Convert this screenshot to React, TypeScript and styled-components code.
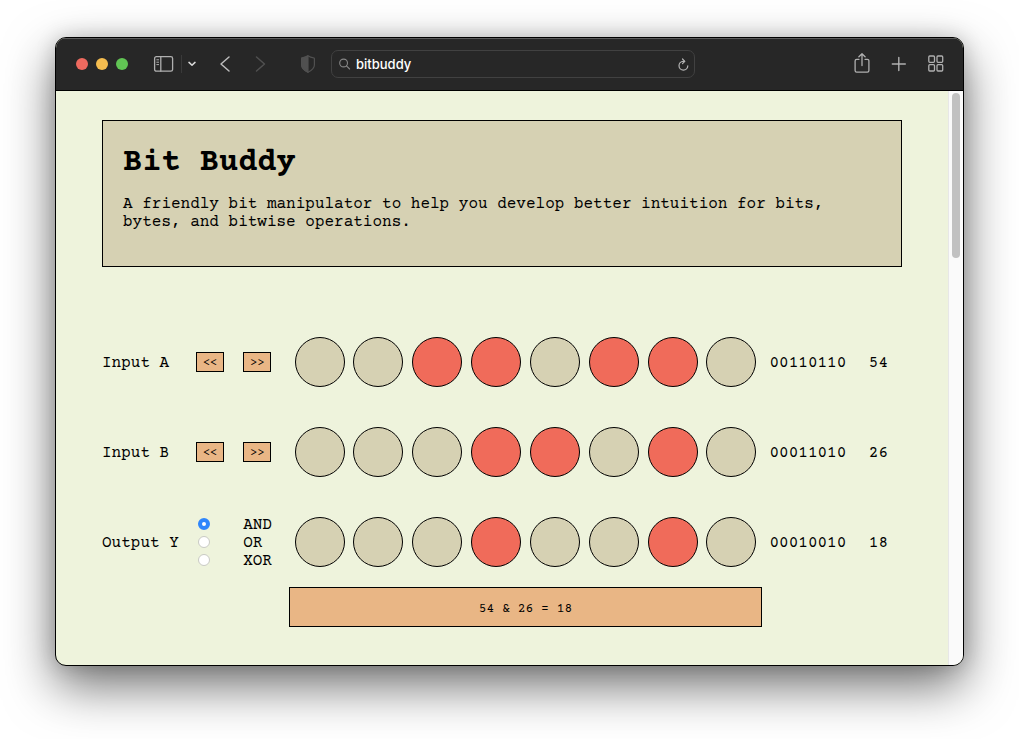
import React, { useState } from "react";
import styled, { createGlobalStyle } from "styled-components";

const slab = `"Courier Prime", "Liberation Mono", "Courier New", monospace`;

const GlobalStyle = createGlobalStyle`
  *, *::before, *::after { box-sizing: border-box; }
  body { margin: 0; background: #fff; }
  button, input { font: inherit; color: inherit; }
`;

const Desktop = styled.div`
  padding: 37px 55px 73px;
`;

const Window = styled.div`
  border: 1px solid #000;
  border-radius: 11px;
  overflow: hidden;
  background: #eef3dc;
  box-shadow: 0 20px 50px rgba(0, 0, 0, 0.56), 0 0 20px rgba(0, 0, 0, 0.16);
`;

const Toolbar = styled.header`
  display: flex;
  align-items: center;
  height: 53px;
  padding: 0 19px 0 20px;
  background: #272727;
  border-bottom: 1px solid #000;
  box-shadow: inset 0 1px 0 #5c5c5c;
`;

const Lights = styled.div`
  display: flex;
  gap: 8px;
  margin-right: 25px;
`;

const Light = styled.button<{ $color: string }>`
  width: 12px;
  height: 12px;
  padding: 0;
  border: 0;
  border-radius: 50%;
  background: ${(p) => p.$color};
`;

const ToolButton = styled.button<{ $tone?: string }>`
  display: flex;
  padding: 0;
  border: 0;
  background: none;
  color: ${(p) => p.$tone ?? "#b0b0b0"};

  svg {
    display: block;
    fill: none;
    stroke: currentColor;
    stroke-linecap: round;
    stroke-linejoin: round;
  }
`;

const SidebarTools = styled.div`
  display: flex;
  align-items: center;
  gap: 6px;
  margin-right: 23px;
`;

const Divider = styled.span`
  width: 1px;
  height: 18px;
  background: #3a3a3a;
`;

const NavTools = styled.div`
  display: flex;
  align-items: center;
  gap: 22px;
  margin-right: 33px;
`;

const AddressBar = styled.label`
  display: flex;
  flex: 1;
  align-items: center;
  min-width: 0;
  height: 28px;
  margin: 0 159px 0 15px;
  padding: 0 5px 0 7px;
  border: 1px solid #414141;
  border-radius: 7px;
  gap: 5px;
`;

const AddressInput = styled.input`
  flex: 1;
  min-width: 0;
  padding: 0;
  border: 0;
  outline: 0;
  background: none;
  color: #fff;
  font: 500 13px/18px Inter, sans-serif;
`;

const WindowTools = styled.div`
  display: flex;
  align-items: center;
  gap: 21px;
`;

const Viewport = styled.div`
  display: flex;
`;

const Page = styled.main`
  flex: 1;
  min-width: 0;
  padding: 29px 46px 38px;
  color: #000;
  font: 16px/18px ${slab};
`;

const Content = styled.div`
  max-width: 800px;
  margin: 0 auto;
`;

const ScrollTrack = styled.div`
  width: 15px;
  padding: 2px 3px;
  border-left: 1px solid #e7e7e7;
  background: #fafafa;
`;

const ScrollThumb = styled.div`
  height: 165px;
  border-radius: 4px;
  background: #c1c1c1;
`;

const Intro = styled.section`
  margin-bottom: 50px;
  padding: 20px;
  border: 1px solid #000;
  background: #d6d1b3;
`;

const Title = styled.h1`
  margin: 0 0 10px;
  font-size: 32px;
  line-height: 44px;
`;

const Lead = styled.p`
  margin: 0 0 15px;
`;

const Row = styled.div`
  display: grid;
  grid-template-columns: 2fr 1fr 1fr 10fr 2fr 1fr;
  align-items: center;
  min-height: 90px;

  & > * {
    min-width: 0;
  }
`;

const RowLabel = styled.span`
  line-height: 20px;
  padding-top: 2px;
`;

const Bits = styled.div`
  display: grid;
  grid-template-columns: repeat(8, 1fr);
  justify-items: center;
`;

const Bit = styled.button<{ $on: boolean }>`
  width: 50px;
  height: 50px;
  padding: 0;
  border: 1px solid #000;
  border-radius: 50%;
  background: ${(p) => (p.$on ? "#f06b5a" : "#d6d1b3")};
`;

const ShiftButton = styled.button`
  justify-self: start;
  width: 28px;
  height: 20px;
  padding: 4px 0 0;
  border: 1px solid #000;
  background: #e9b685;
  font-size: 12px;
  line-height: 14px;
`;

const Value = styled.output`
  padding-top: 2px;
  line-height: 20px;
  text-align: center;
`;

const Operators = styled.div`
  grid-column: span 2;
`;

const Operator = styled.label`
  display: grid;
  grid-template-columns: 1fr 1fr;
  align-items: center;
  height: 18px;
`;

const OperatorName = styled.span`
  padding-top: 2px;
  line-height: 16px;
`;

const Radio = styled.input`
  appearance: none;
  width: 12px;
  height: 12px;
  margin: 0 2px;
  border: 1px solid #c9cac4;
  border-radius: 50%;
  background: #fff;

  &:checked {
    border: 4px solid #2f86fb;
  }
`;

const FormulaButton = styled.button`
  grid-column: 4;
  height: 40px;
  margin: 0 -1px;
  padding: 4px 0 0;
  border: 1px solid #000;
  background: #e9b685;
  font-size: 13px;
  line-height: 18px;
`;

const FormulaRow = styled(Row)`
  min-height: 40px;
`;

const OPERATIONS = [
  { name: "AND", symbol: "&", apply: (a: number, b: number) => a & b },
  { name: "OR", symbol: "|", apply: (a: number, b: number) => a | b },
  { name: "XOR", symbol: "^", apply: (a: number, b: number) => a ^ b },
];

const POSITIONS = [7, 6, 5, 4, 3, 2, 1, 0];

function BitRow(props: {
  label: string;
  value: number;
  onChange?: (value: number) => void;
  children: React.ReactNode;
}) {
  const { label, value, onChange, children } = props;
  return (
    <Row>
      <RowLabel>{label}</RowLabel>
      {children}
      <Bits>
        {POSITIONS.map((n) => (
          <Bit
            key={n}
            type="button"
            aria-label={`${label} bit ${n}`}
            $on={((value >> n) & 1) === 1}
            onClick={() => onChange?.(value ^ (1 << n))}
          />
        ))}
      </Bits>
      <Value>{value.toString(2).padStart(8, "0")}</Value>
      <Value>{value}</Value>
    </Row>
  );
}

function InputRow(props: { label: string; value: number; onChange: (value: number) => void }) {
  const { label, value, onChange } = props;
  return (
    <BitRow label={label} value={value} onChange={onChange}>
      <ShiftButton type="button" onClick={() => onChange((value << 1) & 255)}>
        &lt;&lt;
      </ShiftButton>
      <ShiftButton type="button" onClick={() => onChange(value >> 1)}>
        &gt;&gt;
      </ShiftButton>
    </BitRow>
  );
}

function BrowserToolbar() {
  return (
    <Toolbar>
      <Lights>
        <Light $color="#ee6a5f" aria-label="Close" />
        <Light $color="#f5bd4f" aria-label="Minimize" />
        <Light $color="#61c454" aria-label="Zoom" />
      </Lights>
      <SidebarTools>
        <ToolButton aria-label="Sidebar">
          <svg width="22" height="18" viewBox="0 0 22 18" strokeWidth="1.3">
            <rect x="1.6" y="1.6" width="18" height="14.6" rx="1.8" />
            <path d="M7.8 1.6v14.6" />
            <path d="M3.8 4.8h1.8M3.8 7.2h1.8M3.8 9.6h1.8" strokeWidth="1" />
          </svg>
        </ToolButton>
        <Divider />
        <ToolButton aria-label="Tab groups" $tone="#d8d8d8">
          <svg width="8" height="6" viewBox="0 0 8 6" strokeWidth="1.5">
            <path d="M1 1.4 4 4.3 7 1.4" />
          </svg>
        </ToolButton>
      </SidebarTools>
      <NavTools>
        <ToolButton aria-label="Back" $tone="#bcbcbc">
          <svg width="13" height="18" viewBox="0 0 13 18" strokeWidth="1.5">
            <path d="M10 2 2 9l8 7" />
          </svg>
        </ToolButton>
        <ToolButton aria-label="Forward" $tone="#505050">
          <svg width="13" height="18" viewBox="0 0 13 18" strokeWidth="1.5">
            <path d="M2.500 2l8 7-8 7" />
          </svg>
        </ToolButton>
      </NavTools>
      <ToolButton aria-label="Privacy report" $tone="#505050">
        <svg width="16" height="20" viewBox="0 0 16 20" strokeWidth="1.2">
          <path d="M8 1.8C6.3 3 4.2 3.6 2.3 3.8c-.5 0-.7.3-.7.8v6.3c0 3.5 3 5.5 6.4 7.4 3.4-1.9 6.4-3.9 6.4-7.4V4.6c0-.5-.2-.8-.7-.8C11.8 3.6 9.7 3 8 1.8z" />
          <path
            d="M8 1.8C6.3 3 4.2 3.6 2.3 3.8c-.5 0-.7.3-.7.8v6.3c0 3.5 3 5.5 6.4 7.4z"
            fill="currentColor"
          />
        </svg>
      </ToolButton>
      <AddressBar>
        <ToolButton as="span" $tone="#868686">
          <svg width="12" height="12" viewBox="0 0 12 12" strokeWidth="1.1">
            <circle cx="4.6" cy="5" r="3.9" />
            <path d="M7.5 7.9 10.6 11" />
          </svg>
        </ToolButton>
        <AddressInput aria-label="Address" defaultValue="bitbuddy" />
        <ToolButton aria-label="Reload" $tone="#b4b4b4">
          <svg width="12" height="14" viewBox="0 0 12 14" strokeWidth="1.2">
            <path d="M7.5 4.3H6.2a4.4 4.4 0 1 0 4.6 4.5" />
            <path d="M5.5 2 7.8 4.3 5.5 6.6" />
          </svg>
        </ToolButton>
      </AddressBar>
      <WindowTools>
        <ToolButton aria-label="Share">
          <svg width="16" height="22" viewBox="0 0 16 22" strokeWidth="1.3">
            <path d="M5 6.3H2.7c-1 0-1.6.6-1.6 1.6v9.7c0 1 .6 1.6 1.6 1.6h10.6c1 0 1.6-.6 1.6-1.6V7.9c0-1-.6-1.6-1.6-1.6H11" />
            <path d="M8 12.5V.9M4.9 3.7 8 .8l3.1 2.9" />
          </svg>
        </ToolButton>
        <ToolButton aria-label="New tab">
          <svg width="16" height="16" viewBox="0 0 16 16" strokeWidth="1.4">
            <path d="M7.8 1.5v13M1.3 8h13" />
          </svg>
        </ToolButton>
        <ToolButton aria-label="Tab overview">
          <svg width="16" height="18" viewBox="0 0 16 18" strokeWidth="1.3">
            <rect x=".8" y="1" width="5.7" height="6.3" rx="1" />
            <rect x="9" y="1" width="5.7" height="6.3" rx="1" />
            <rect x=".8" y="9.7" width="5.7" height="6.3" rx="1" />
            <rect x="9" y="9.7" width="5.7" height="6.3" rx="1" />
          </svg>
        </ToolButton>
      </WindowTools>
    </Toolbar>
  );
}

export default function App() {
  const [a, setA] = useState(54);
  const [b, setB] = useState(26);
  const [selected, setSelected] = useState(0);
  const operation = OPERATIONS[selected];
  const y = operation.apply(a, b);

  return (
    <Desktop>
      <GlobalStyle />
      <Window>
        <BrowserToolbar />
        <Viewport>
          <Page>
            <Content>
              <Intro>
                <Title>Bit Buddy</Title>
                <Lead>
                  A friendly bit manipulator to help you develop better intuition for bits, bytes,
                  and bitwise operations.
                </Lead>
              </Intro>
              <InputRow label="Input A" value={a} onChange={setA} />
              <InputRow label="Input B" value={b} onChange={setB} />
              <BitRow label="Output Y" value={y}>
                <Operators role="radiogroup" aria-label="Operation">
                  {OPERATIONS.map((op, i) => (
                    <Operator key={op.name}>
                      <Radio
                        type="radio"
                        name="operation"
                        checked={i === selected}
                        onChange={() => setSelected(i)}
                      />
                      <OperatorName>{op.name}</OperatorName>
                    </Operator>
                  ))}
                </Operators>
              </BitRow>
              <FormulaRow>
                <FormulaButton type="button">
                  {`${a} ${operation.symbol} ${b} = ${y}`}
                </FormulaButton>
              </FormulaRow>
            </Content>
          </Page>
          <ScrollTrack>
            <ScrollThumb />
          </ScrollTrack>
        </Viewport>
      </Window>
    </Desktop>
  );
}
